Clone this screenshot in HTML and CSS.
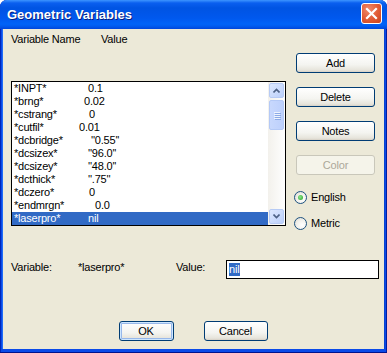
FILE: index.html
```html
<!DOCTYPE html>
<html>
<head>
<meta charset="utf-8">
<link rel="stylesheet" href="styles.css">
</head>
<body>
<div class="window">
  <div class="titlebar">
    <span class="title">Geometric Variables</span>
    <div class="close">
      <svg width="13" height="13" viewBox="0 0 13 13"><path d="M2 2 L11 11 M11 2 L2 11" stroke="#fff" stroke-width="2.2" stroke-linecap="square"/></svg>
    </div>
  </div>
  <div class="client">
    <div class="top">
      <div class="left">
        <div class="head"><span class="h-name">Variable Name</span><span>Value</span></div>
        <div class="list">
          <div class="rows">
            <div class="row"><span class="n">*INPT*</span><span class="v" style="--x:76px">0.1</span></div>
            <div class="row"><span class="n">*brng*</span><span class="v" style="--x:72px">0.02</span></div>
            <div class="row"><span class="n">*cstrang*</span><span class="v" style="--x:77px">0</span></div>
            <div class="row"><span class="n">*cutfil*</span><span class="v" style="--x:67px">0.01</span></div>
            <div class="row"><span class="n">*dcbridge*</span><span class="v" style="--x:79px">''0.55''</span></div>
            <div class="row"><span class="n">*dcsizex*</span><span class="v" style="--x:76px">''96.0''</span></div>
            <div class="row"><span class="n">*dcsizey*</span><span class="v" style="--x:76px">''48.0''</span></div>
            <div class="row"><span class="n">*dcthick*</span><span class="v" style="--x:76px">''.75''</span></div>
            <div class="row"><span class="n">*dczero*</span><span class="v" style="--x:77px">0</span></div>
            <div class="row"><span class="n">*endmrgn*</span><span class="v" style="--x:83px">0.0</span></div>
            <div class="row sel"><span class="n">*laserpro*</span><span class="v" style="--x:76px">nil</span></div>
          </div>
          <div class="scroll">
            <div class="sbtn">
              <svg width="7" height="5" viewBox="0 0 7 5"><path d="M0.5 4.5 L3.5 1.5 L6.5 4.5" fill="none" stroke="#4d6185" stroke-width="1.6"/></svg>
            </div>
            <div class="thumb">
              <div class="grip"></div><div class="grip"></div><div class="grip"></div><div class="grip"></div>
            </div>
            <div class="track"></div>
            <div class="sbtn">
              <svg width="7" height="5" viewBox="0 0 7 5"><path d="M0.5 0.5 L3.5 3.5 L6.5 0.5" fill="none" stroke="#4d6185" stroke-width="1.6"/></svg>
            </div>
          </div>
        </div>
      </div>
      <div class="right">
        <div class="btn">Add</div>
        <div class="btn">Delete</div>
        <div class="btn">Notes</div>
        <div class="btn disabled">Color</div>
        <div class="radio first"><span class="circle on"><span class="dot"></span></span><span>English</span></div>
        <div class="radio"><span class="circle"></span><span>Metric</span></div>
      </div>
    </div>
    <div class="varrow">
      <span class="lbl-var">Variable:</span>
      <span class="lbl-name">*laserpro*</span>
      <span class="lbl-val">Value:</span>
      <div class="input"><span class="hl">nil</span></div>
    </div>
    <div class="okrow">
      <div class="btn ok">OK</div>
      <div class="btn cancel">Cancel</div>
    </div>
  </div>
</div>
</body>
</html>
```

FILE: styles.css
```css
html, body {
  margin: 0;
  padding: 0;
  background: #ffffff;
}
body {
  font-family: "Liberation Sans", Arial, sans-serif;
  font-size: 11px;
  line-height: 13px;
  letter-spacing: -0.2px;
  color: #000;
}
.window {
  width: 387px;
  height: 353px;
  display: flex;
  flex-direction: column;
  box-sizing: border-box;
  background: #0a4ae8;
  border-radius: 7px 7px 0 0;
  overflow: hidden;
  box-shadow: inset 0 -1px 0 #00138c, inset 1px 0 0 #0027b8, inset -1px 0 0 #001ea0;
}
.titlebar {
  height: 29px;
  flex: none;
  display: flex;
  align-items: center;
  justify-content: space-between;
  padding: 0 5px 0 7px;
  background: linear-gradient(#3d95ff 0px, #0a5fef 3px, #0054e3 8px, #0058ee 18px, #0063f8 24px, #005cf0 26px, #0046db 29px);
}
.title {
  color: #fff;
  font-weight: bold;
  font-size: 13px;
  letter-spacing: 0;
  text-shadow: 1px 1px 0 #0a1e80;
  padding-bottom: 1px;
}
.close {
  width: 19px;
  height: 19px;
  border: 1px solid #fff;
  border-radius: 3px;
  background: radial-gradient(circle at 35% 30%, #f08a6c 0%, #e05a33 55%, #c8431f 100%);
  display: flex;
  align-items: center;
  justify-content: center;
  margin-bottom: 2px;
}
.close svg { display: block; }
.client {
  flex: 1;
  margin: 0 3px 4px 3px;
  background: #ece9d8;
  display: flex;
  flex-direction: column;
  box-shadow: -1px 0 0 #1f6cf6, 1px 0 0 #0842d0;
}
.top {
  display: flex;
  align-items: flex-start;
  padding-left: 8px;
}
.left {
  width: 275px;
}
.head {
  margin-top: 4px;
  display: flex;
  height: 13px;
}
.h-name {
  width: 90px;
}
.list {
  margin-top: 35px;
  height: 143px;
  border: 1px solid #000;
  background: #fff;
  display: flex;
}
.rows {
  flex: 1;
  display: flex;
  flex-direction: column;
}
.row {
  height: 13px;
  display: flex;
  position: relative;
  padding-left: 2px;
  white-space: nowrap;
}
.row .v {
  position: absolute;
  left: var(--x);
  top: 0;
}
.row.sel {
  background: #316ac5;
  color: #fff;
}
.scroll {
  width: 17px;
  display: flex;
  flex-direction: column;
  background: linear-gradient(90deg, #f3f1ec, #fefefe);
  align-items: center;
  padding: 1px 0;
  box-sizing: border-box;
}
.sbtn {
  width: 13px;
  height: 13px;
  flex: none;
  border: 1px solid #b7cbf5;
  border-radius: 2px;
  background: linear-gradient(135deg, #dde8fe, #bcd0fb);
  display: flex;
  align-items: center;
  justify-content: center;
}
.sbtn svg { display: block; }
.thumb {
  margin-top: 2px;
  width: 13px;
  height: 28px;
  flex: none;
  border: 1px solid #b4c9f6;
  border-radius: 2px;
  background: linear-gradient(90deg, #c8d8fd, #bdd0fc);
  display: flex;
  flex-direction: column;
  align-items: center;
  justify-content: center;
  gap: 1px;
}
.grip {
  width: 6px;
  height: 1px;
  background: #eef4fe;
  box-shadow: 1px 1px 0 #8caae6;
}
.track { flex: 1; }
.right {
  margin-left: 10px;
  padding-top: 24px;
  display: flex;
  flex-direction: column;
}
.btn {
  width: 77px;
  height: 18px;
  border: 1px solid #003c74;
  border-radius: 3px;
  background: linear-gradient(#ffffff 0%, #f4f4f0 60%, #e6e4db 90%, #d6d0c5 100%);
  display: flex;
  align-items: center;
  justify-content: center;
  margin-bottom: 14px;
}
.btn.disabled {
  border-color: #c9c7ba;
  background: #f5f4ea;
  color: #aca899;
}
.radio {
  display: flex;
  align-items: center;
  height: 13px;
  gap: 4px;
  margin-top: 13px;
  margin-left: -2px;
}
.radio.first { margin-top: 2px; }
.circle {
  width: 11px;
  height: 11px;
  border: 1px solid #1c5180;
  border-radius: 50%;
  background: radial-gradient(circle at 65% 65%, #ffffff 0%, #f2f1ec 50%, #d8d5cb 100%);
  display: flex;
  align-items: center;
  justify-content: center;
}
.dot {
  width: 5px;
  height: 5px;
  border-radius: 50%;
  background: radial-gradient(circle at 40% 40%, #8ee68e, #21a121);
}
.varrow {
  margin-top: 30px;
  display: flex;
  align-items: flex-start;
  padding-left: 8px;
  height: 19px;
}
.lbl-var { width: 67px; margin-top: 1px; }
.lbl-name { width: 98px; margin-top: 1px; }
.lbl-val { width: 50px; margin-top: 1px; }
.input {
  width: 149px;
  height: 17px;
  border: 1px solid #000;
  background: #fff;
  display: flex;
  align-items: center;
  padding-left: 2px;
}
.hl {
  background: #316ac5;
  color: #fff;
  line-height: 13px;
  padding-right: 1px;
}
.okrow {
  margin-top: 42px;
  display: flex;
  justify-content: center;
  gap: 30px;
  padding-right: 1px;
}
.okrow .btn { margin-bottom: 0; }
.btn.ok {
  width: 53px;
  box-shadow: inset 0 0 0 1px #cee7ff, inset 0 0 0 2px #98b8ea;
}
.btn.cancel { width: 62px; }
```
